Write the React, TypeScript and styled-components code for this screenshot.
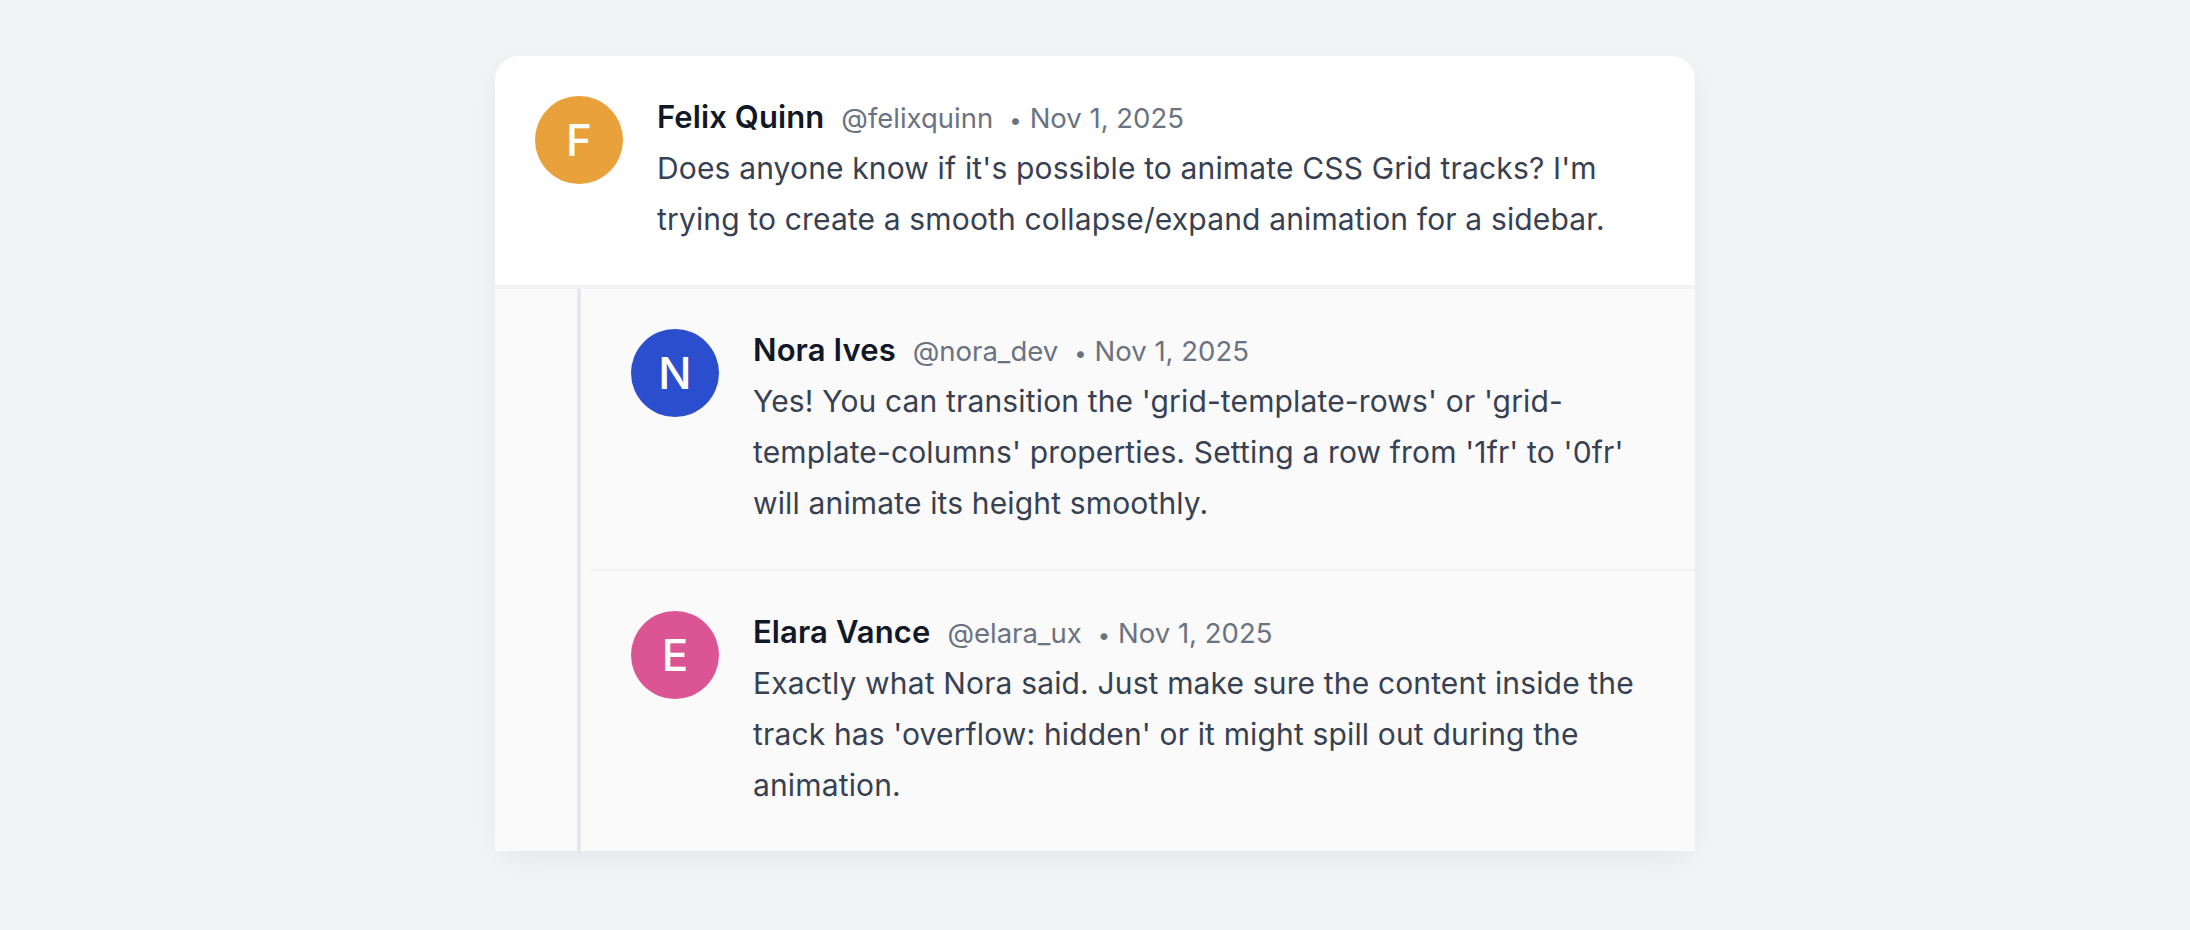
import React from 'react';
import styled, { createGlobalStyle } from 'styled-components';

const GlobalStyle = createGlobalStyle`
  body {
    margin: 0;
    background: #f3f4f6;
    font-family: Inter, "Noto Sans", "Liberation Sans", sans-serif;
    -webkit-font-smoothing: antialiased;
  }
`;

const Page = styled.div`
  display: flex;
  justify-content: center;
  padding: 56px 0 80px;
`;

const Card = styled.div`
  width: 1200px;
  background: #ffffff;
  border-radius: 24px;
  box-shadow: 0 10px 30px rgba(17, 24, 39, 0.06);
`;

const Post = styled.div<{ $divider?: boolean }>`
  display: flex;
  gap: 34px;
  padding: 40px;
  border-top: ${p => (p.$divider ? '2px solid #f1f2f4' : 'none')};
`;

const TopPost = styled(Post)`
  border-bottom: 4px solid #f1f2f4;
`;

const Avatar = styled.div<{ $color: string }>`
  flex: 0 0 88px;
  width: 88px;
  height: 88px;
  border-radius: 50%;
  background: ${p => p.$color};
  color: #ffffff;
  display: flex;
  align-items: center;
  justify-content: center;
  font-size: 44px;
  font-weight: 500;
`;

const Body = styled.div`
  flex: 1;
  min-width: 0;
`;

const Header = styled.div`
  display: flex;
  align-items: baseline;
  height: 42px;
  line-height: 42px;
  margin-bottom: 5px;
`;

const Name = styled.span`
  font-size: 31px;
  font-weight: 600;
  color: #111827;
  letter-spacing: 0.1px;
`;

const Handle = styled.span`
  margin-left: 17px;
  font-size: 27.5px;
  color: #6b7280;
`;

const Dot = styled.span`
  margin: 0 8px 0 16px;
  font-size: 22px;
  color: #6b7280;
`;

const Date = styled.span`
  font-size: 27.5px;
  color: #6b7280;
`;

const Text = styled.p`
  margin: 0;
  font-size: 30px;
  line-height: 51px;
  letter-spacing: 0.15px;
  color: #374151;
`;

const RepliesSection = styled.div`
  padding-left: 82px;
  background: #fafafa;
`;

const Thread = styled.div`
  padding-left: 10px;
  border-left: 4px solid #e5e7eb;
`;

type Comment = {
  initial: string;
  color: string;
  name: string;
  handle: string;
  date: string;
  text: string;
};

const main: Comment = {
  initial: 'F',
  color: '#e9a23b',
  name: 'Felix Quinn',
  handle: '@felixquinn',
  date: 'Nov 1, 2025',
  text: "Does anyone know if it's possible to animate CSS Grid tracks? I'm trying to create a smooth collapse/expand animation for a sidebar.",
};

const replies: Comment[] = [
  {
    initial: 'N',
    color: '#2b4ecf',
    name: 'Nora Ives',
    handle: '@nora_dev',
    date: 'Nov 1, 2025',
    text: "Yes! You can transition the 'grid-template-rows' or 'grid-template-columns' properties. Setting a row from '1fr' to '0fr' will animate its height smoothly.",
  },
  {
    initial: 'E',
    color: '#db5595',
    name: 'Elara Vance',
    handle: '@elara_ux',
    date: 'Nov 1, 2025',
    text: "Exactly what Nora said. Just make sure the content inside the track has 'overflow: hidden' or it might spill out during the animation.",
  },
];

const Content: React.FC<{ c: Comment }> = ({ c }) => (
  <>
    <Avatar $color={c.color}>{c.initial}</Avatar>
    <Body>
      <Header>
        <Name>{c.name}</Name>
        <Handle>{c.handle}</Handle>
        <Dot>•</Dot>
        <Date>{c.date}</Date>
      </Header>
      <Text>{c.text}</Text>
    </Body>
  </>
);

const App: React.FC = () => {
  return (
    <>
      <GlobalStyle />
      <Page>
        <Card>
          <TopPost>
            <Content c={main} />
          </TopPost>
          <RepliesSection>
            <Thread>
              {replies.map((r, i) => (
                <Post key={r.handle} $divider={i > 0}>
                  <Content c={r} />
                </Post>
              ))}
            </Thread>
          </RepliesSection>
        </Card>
      </Page>
    </>
  );
};

export default App;
